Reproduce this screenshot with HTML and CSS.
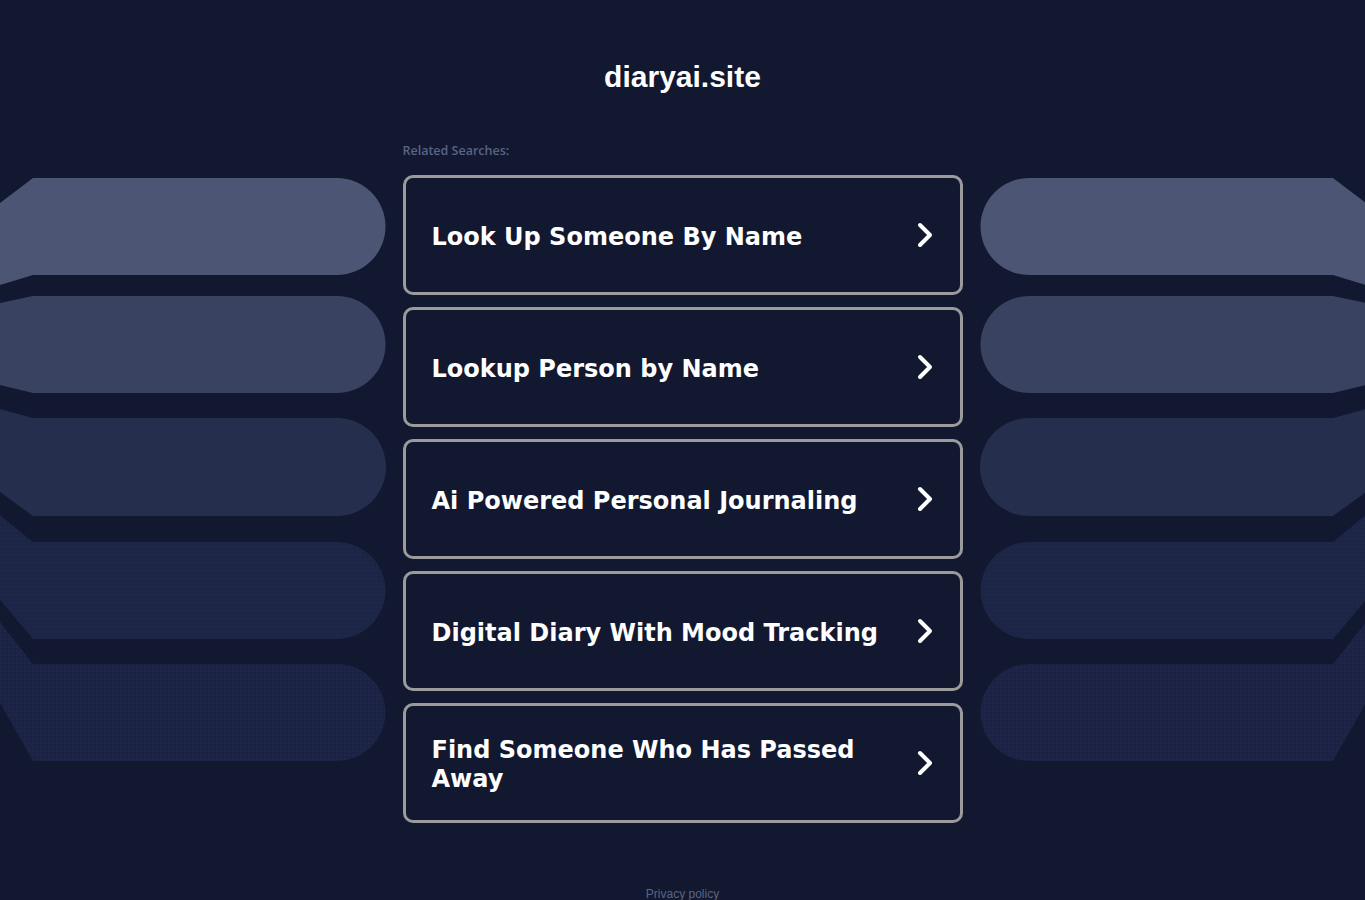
FILE: index.html
```html
<!DOCTYPE html>
<html lang="en">
<head>
<meta charset="UTF-8">
<meta name="viewport" content="width=device-width, initial-scale=1.0">
<title>diaryai.site</title>
<link rel="stylesheet" href="styles.css">
</head>
<body>

<!-- Shared band artwork, drawn on the left and mirrored on the right -->
<svg class="defs" width="0" height="0" aria-hidden="true">
  <defs>
    <pattern id="dots" width="4" height="4" patternUnits="userSpaceOnUse">
      <circle cx="1" cy="1" r="0.6" fill="#3a4670" />
    </pattern>
    <symbol id="bands" viewBox="0 0 403 600">
      <path fill="#4c5573" d="M0 33 L33 8 L337 8 A48.5 48.5 0 0 1 337 105 L33 105 L0 115 Z" />
      <path fill="#3a4261" d="M0 133 L33 126 L337 126 A48.5 48.5 0 0 1 337 223 L33 223 L0 215 Z" />
      <path fill="#262e4d" d="M0 239 L33 248 L337 248 A48.5 48.5 0 0 1 337 346 L33 346 L0 322 Z" />
      <path fill="#1d2546" d="M0 345 L33 372 L337 372 A48.5 48.5 0 0 1 337 469 L33 469 L0 430 Z" />
      <path fill="url(#dots)" opacity="0.35" d="M0 345 L33 372 L337 372 A48.5 48.5 0 0 1 337 469 L33 469 L0 430 Z" />
      <path fill="#1b2244" d="M0 452 L33 494 L337 494 A48.5 48.5 0 0 1 337 591 L33 591 L0 533 Z" />
      <path fill="url(#dots)" opacity="0.5" d="M0 452 L33 494 L337 494 A48.5 48.5 0 0 1 337 591 L33 591 L0 533 Z" />
    </symbol>
  </defs>
</svg>

<h1 class="title">diaryai.site</h1>

<div class="layout">
  <div class="side">
    <svg class="bands" viewBox="0 0 403 600"><use href="#bands" /></svg>
  </div>

  <div class="center">
    <p class="label">Related Searches:</p>
    <ul class="links">
      <li><a class="link" href="#"><span class="link-text">Look Up Someone By Name</span><svg class="chevron" viewBox="0 0 18 28"><path d="M4 4 L14 14 L4 24" /></svg></a></li>
      <li><a class="link" href="#"><span class="link-text">Lookup Person by Name</span><svg class="chevron" viewBox="0 0 18 28"><path d="M4 4 L14 14 L4 24" /></svg></a></li>
      <li><a class="link" href="#"><span class="link-text">Ai Powered Personal Journaling</span><svg class="chevron" viewBox="0 0 18 28"><path d="M4 4 L14 14 L4 24" /></svg></a></li>
      <li><a class="link" href="#"><span class="link-text">Digital Diary With Mood Tracking</span><svg class="chevron" viewBox="0 0 18 28"><path d="M4 4 L14 14 L4 24" /></svg></a></li>
      <li><a class="link" href="#"><span class="link-text">Find Someone Who Has Passed Away</span><svg class="chevron" viewBox="0 0 18 28"><path d="M4 4 L14 14 L4 24" /></svg></a></li>
    </ul>
  </div>

  <div class="side side-right">
    <svg class="bands" viewBox="0 0 403 600"><use href="#bands" /></svg>
  </div>
</div>

<footer class="footer">
  <a href="#">Privacy policy</a>
</footer>

</body>
</html>
```

FILE: styles.css
```css
body {
  margin: 0;
  background-color: #111830;
  font-family: "Liberation Sans", Arial, sans-serif;
  color: #fff;
}
.defs {
  position: absolute;
  width: 0;
  height: 0;
}
.title {
  margin: 0;
  padding-top: 61px;
  font-size: 30px;
  line-height: 32px;
  text-align: center;
  font-weight: bold;
}
.layout {
  display: grid;
  grid-template-columns: 1fr 560px 1fr;
  margin-top: 45px;
}
.side {
  padding-top: 32px;
  overflow: hidden;
}
.bands {
  display: block;
  width: 403px;
  height: 600px;
}
.side-right .bands {
  transform: scaleX(-1);
}
.label {
  margin: 5px 0 16px;
  font-family: "Open Sans", sans-serif;
  font-weight: 600;
  font-size: 12.5px;
  line-height: 16px;
  color: #5a6385;
}
.links {
  list-style: none;
  margin: 0;
  padding: 0;
  display: flex;
  flex-direction: column;
  gap: 12px;
}
.link {
  box-sizing: border-box;
  height: 120px;
  display: flex;
  align-items: center;
  padding: 0 26px;
  border: 3px solid #9b9b9b;
  border-radius: 10px;
  color: #fff;
  text-decoration: none;
}
.link-text {
  flex: 1;
  padding: 4px 20px 0 0;
  font-family: "DejaVu Sans", Verdana, sans-serif;
  font-weight: bold;
  font-size: 24px;
  line-height: 29px;
}
.chevron {
  width: 18px;
  height: 28px;
  flex-shrink: 0;
  fill: none;
  stroke: #fff;
  stroke-width: 4;
  stroke-linecap: round;
  stroke-linejoin: round;
}
.footer {
  margin-top: 63px;
  padding-bottom: 20px;
  text-align: center;
  font-size: 12px;
  line-height: 16px;
}
.footer a {
  color: #5b6485;
  text-decoration: none;
}
```
